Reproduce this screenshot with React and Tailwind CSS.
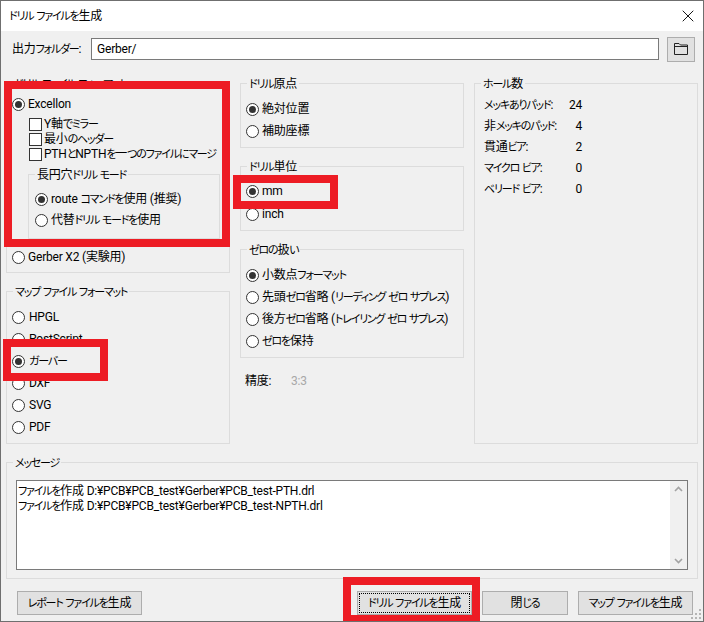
import { X } from 'lucide-react';

// kana is much narrower in the reference than in Noto, so tighten only those runs
const T = ({ children }) =>
  children.split(/([\u3040-\u30ff]+)/).map((part, i) =>
    i % 2 ? (
      <span key={i} className="text-[11px] tracking-[-1.2px]">
        {part}
      </span>
    ) : (
      part
    ),
  );

const Radio = ({ checked, label, className = '', labelClass = 'ml-[3px]' }) => (
  <div className={`flex items-center h-[13px] ${className}`}>
    <span className="w-[13px] h-[13px] shrink-0 rounded-full border border-[#333] bg-white flex items-center justify-center">
      {checked && <span className="w-[7px] h-[7px] rounded-full bg-[#333]" />}
    </span>
    <span className={`whitespace-nowrap leading-[13px] ${labelClass}`}><T>{label}</T></span>
  </div>
);

const Check = ({ label }) => (
  <div className="flex items-center h-[13px]">
    <span className="w-[13px] h-[13px] shrink-0 border border-[#333] bg-white" />
    <span className="ml-[2px] whitespace-nowrap leading-[13px]"><T>{label}</T></span>
  </div>
);

const Group = ({ title, className = '', children }) => (
  <div className={`relative border border-[#dcdcdc] ${className}`}>
    <span className="absolute left-[6px] top-[-8px] px-[2px] bg-[#f0f0f0] leading-[16px] whitespace-nowrap"><T>{title}</T></span>
    {children}
  </div>
);

const Button = ({ children, className = '', focused }) => (
  <button className={`h-[24px] bg-[#e1e1e1] border border-[#adadad] flex items-center justify-center whitespace-nowrap relative ${className}`}>
    {focused && <span className="absolute inset-[1px] border border-dotted border-black" />}
    <span><T>{children}</T></span>
  </button>
);

const Highlight = ({ className }) => (
  <div className={`absolute border-[8px] border-[#ed1c24] ${className}`} />
);

const holes = [
  ['メッキありパッド:', '24'],
  ['非メッキのパッド:', '4'],
  ['貫通ビア:', '2'],
  ['マイクロ ビア:', '0'],
  ['ベリード ビア:', '0'],
];

export default function App() {
  return (
    <div
      className="relative w-[704px] h-[622px] flex flex-col border border-[#6f6f6f] bg-[#f0f0f0] text-[12px] tracking-[-0.2px] text-black overflow-hidden [font-feature-settings:'palt']"
      style={{ fontFamily: 'Roboto, "Noto Sans CJK JP", sans-serif' }}
    >
      <div className="h-[30px] shrink-0 bg-white flex items-center justify-between pl-[8px] pr-[5px]">
        <span><T>ドリル ファイルを生成</T></span>
        <X className="w-[20px] h-[20px] text-black" strokeWidth={1.1} />
      </div>

      <div className="h-[36px] shrink-0 flex items-center pl-[11px] pr-[7px]">
        <span className="w-[79px] whitespace-nowrap"><T>出力フォルダー:</T></span>
        <div className="w-[568px] h-[22px] bg-white border border-[#7a7a7a] flex items-center pl-[5px]">Gerber/</div>
        <button className="ml-[8px] w-[28px] h-[25px] bg-[#e1e1e1] border border-[#adadad] flex items-center justify-center">
          <svg width="16" height="14" viewBox="0 0 16 14" fill="none" stroke="#222" strokeWidth="1">
            <path d="M1.5 12.5V1.5H6L7.5 3H14.5V12.5Z" />
            <path d="M1.5 4.5H14.5" />
          </svg>
        </button>
      </div>

      <div className="flex gap-[10px] pl-[5px] pt-[16px] h-[395px] shrink-0">
        <div className="w-[224px] flex flex-col gap-[18px]">
          <Group title="ドリル ファイル フォーマット" className="h-[190px] pt-[14px] pl-[5px]">
            <Radio checked label="Excellon" />
            <div className="pl-[17px] pt-[7px] flex flex-col gap-[2px]">
              <Check label="Y軸でミラー" />
              <Check label="最小のヘッダー" />
              <Check label="PTHとNPTHを一つのファイルにマージ" />
            </div>
            <Group title="長円穴ドリル モード" className="ml-[16px] mt-[13px] w-[192px] h-[65px] pt-[18px] pl-[6px]">
              <Radio checked label="route コマンドを使用 (推奨)" />
              <Radio label="代替ドリル モードを使用" className="mt-[8px]" />
            </Group>
            <Radio label="Gerber X2 (実験用)" className="mt-[12px]" />
          </Group>
          <Group title="マップ ファイル フォーマット" className="h-[153px] pt-[19px] pl-[5px]">
            <div className="flex flex-col gap-[9px]">
              <Radio labelClass="ml-[4px]" label="HPGL" />
              <Radio labelClass="ml-[4px]" label="PostScript" />
              <Radio labelClass="ml-[4px]" checked label="ガーバー" />
              <Radio labelClass="ml-[4px]" label="DXF" />
              <Radio labelClass="ml-[4px]" label="SVG" />
              <Radio labelClass="ml-[4px]" label="PDF" />
            </div>
          </Group>
        </div>

        <div className="w-[224px] flex flex-col gap-[18px]">
          <Group title="ドリル原点" className="h-[65px] pt-[19px] pl-[5px]">
            <div className="flex flex-col gap-[9px]">
              <Radio checked label="絶対位置" />
              <Radio label="補助座標" />
            </div>
          </Group>
          <Group title="ドリル単位" className="h-[65px] pt-[18px] pl-[5px]">
            <div className="flex flex-col gap-[10px]">
              <Radio checked label="mm" />
              <Radio label="inch" />
            </div>
          </Group>
          <Group title="ゼロの扱い" className="h-[109px] pt-[19px] pl-[5px]">
            <div className="flex flex-col gap-[9px]">
              <Radio checked label="小数点フォーマット" />
              <Radio label="先頭ゼロ省略 (リーディング ゼロ サプレス)" />
              <Radio label="後方ゼロ省略 (トレイリング ゼロ サプレス)" />
              <Radio label="ゼロを保持" />
            </div>
          </Group>
          <div className="flex pl-[5px] mt-[-3px] leading-[16px]">
            <span className="w-[46px]">精度:</span>
            <span className="text-[#a8a8a8]">3:3</span>
          </div>
        </div>

        <Group title="ホール数" className="w-[224px] h-[361px] pt-[13px] pl-[9px]">
          <div className="flex flex-col gap-[5px] w-[98px]">
            {holes.map(([label, value]) => (
              <div key={label} className="flex justify-between h-[16px] leading-[16px] whitespace-nowrap">
                <span><T>{label}</T></span>
                <span>{value}</span>
              </div>
            ))}
          </div>
        </Group>
      </div>

      <div className="px-[5px] shrink-0">
        <Group title="メッセージ" className="h-[117px] pt-[17px] px-[9px]">
          <div className="h-[90px] bg-white border border-[#7a7a7a] flex">
            <div className="flex-1 pl-[1px] pt-[3px] leading-[15px] whitespace-nowrap">
              <div><T>ファイルを作成 D:¥PCB¥PCB_test¥Gerber¥PCB_test-PTH.drl</T></div>
              <div><T>ファイルを作成 D:¥PCB¥PCB_test¥Gerber¥PCB_test-NPTH.drl</T></div>
            </div>
            <div className="w-[17px] bg-[#f0f0f0] flex flex-col items-center justify-between py-[5px]">
              <svg width="9" height="6" viewBox="0 0 9 6" fill="none" stroke="#a3a3a3" strokeWidth="1.6"><path d="M1 5L4.5 1.5L8 5" /></svg>
              <svg width="9" height="6" viewBox="0 0 9 6" fill="none" stroke="#a3a3a3" strokeWidth="1.6"><path d="M1 1L4.5 4.5L8 1" /></svg>
            </div>
          </div>
        </Group>
      </div>

      <div className="flex pl-[16px] pt-[12px]">
        <Button className="w-[125px]">レポート ファイルを生成</Button>
        <Button focused className="ml-[215px] w-[115px]">ドリル ファイルを生成</Button>
        <Button className="ml-[10px] w-[86px]">閉じる</Button>
        <Button className="ml-[10px] w-[115px]">マップ ファイルを生成</Button>
      </div>

      <svg className="absolute right-[1px] bottom-[1px]" width="11" height="11" viewBox="0 0 11 11" fill="#b5b5b5">
        <rect x="8" y="0" width="2" height="2" />
        <rect x="4" y="4" width="2" height="2" />
        <rect x="8" y="4" width="2" height="2" />
        <rect x="0" y="8" width="2" height="2" />
        <rect x="4" y="8" width="2" height="2" />
        <rect x="8" y="8" width="2" height="2" />
      </svg>

      <Highlight className="left-[3px] top-[80px] w-[226px] h-[166px]" />
      <Highlight className="left-[232px] top-[174px] w-[105px] h-[34px]" />
      <Highlight className="left-[2px] top-[338px] w-[105px] h-[42px]" />
      <Highlight className="left-[342px] top-[576px] w-[137px] h-[46px]" />
    </div>
  );
}
